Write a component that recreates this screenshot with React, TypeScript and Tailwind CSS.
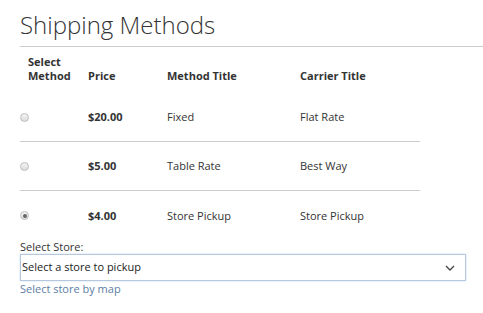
import React from "react";

const rows = [
  { price: "$20.00", method: "Fixed", carrier: "Flat Rate", checked: false },
  { price: "$5.00", method: "Table Rate", carrier: "Best Way", checked: false },
  { price: "$4.00", method: "Store Pickup", carrier: "Store Pickup", checked: true },
];

function Radio({ checked }: { checked: boolean }) {
  return (
    <span className="flex h-[9px] w-[9px] items-center justify-center rounded-full border border-[#bdbdbd] bg-gradient-to-b from-[#f4f4f4] to-[#dcdcdc]">
      {checked && <span className="h-[4px] w-[4px] rounded-full bg-[#666]" />}
    </span>
  );
}

export default function App() {
  return (
    <div className="min-h-[313px] w-[483px] bg-white pl-[20px] text-[#333]" style={{ fontFamily: '"Open Sans", sans-serif' }}>
      <div className="border-b border-[#cccccc] pt-[10px] pb-[6px]">
        <h1 className="text-[24px] font-light leading-[30px] text-[#333]">Shipping Methods</h1>
      </div>
      <div className="w-[400px]">
        <div className="flex pt-[8px] pb-[10px] text-[11px] font-bold leading-[14px] text-[#333]">
          <div className="w-[68px] pl-[8px]">Select<br />Method</div>
          <div className="w-[79px] self-end">Price</div>
          <div className="w-[133px] self-end">Method Title</div>
          <div className="self-end">Carrier Title</div>
        </div>
        {rows.map((r, i) => (
          <div
            key={i}
            className={`flex h-[49px] items-center text-[11px] leading-[14px] ${i < 2 ? "border-b border-[#cccccc]" : ""}`}
          >
            <div className="w-[68px] pl-[0px]">
              <Radio checked={r.checked} />
            </div>
            <div className="w-[79px] font-bold">{r.price}</div>
            <div className="w-[133px]">{r.method}</div>
            <div>{r.carrier}</div>
          </div>
        ))}
      </div>
      <div className="text-[11px] leading-[14px]">Select Store:</div>
      <div className="mr-[17px] flex h-[27px] items-center justify-between border border-[#b5c8dd] bg-white pl-[1px] pr-[10px] shadow-[0_0_2px_#c8daec]">
        <span className="text-[11px] text-[#222]">Select a store to pickup</span>
        <svg width="10" height="6" viewBox="0 0 10 6" fill="none">
          <path d="M1 1l4 4 4-4" stroke="#444" strokeWidth="1.3" />
        </svg>
      </div>
      <div className="pt-[1px] text-[11px] leading-[14px] text-[#5c7ea4]">Select store by map</div>
    </div>
  );
}
